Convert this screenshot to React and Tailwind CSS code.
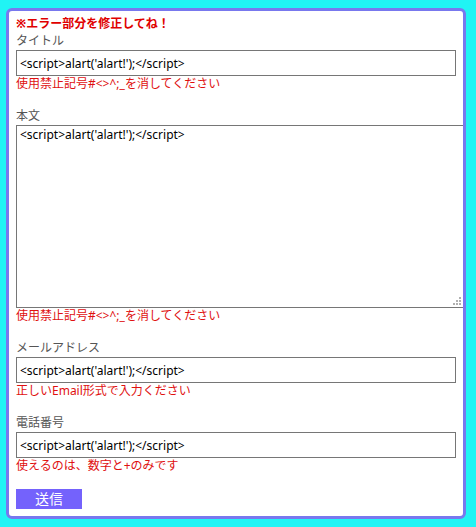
import React from 'react';

const fieldClass =
  'block w-[440px] h-[26px] border border-[#767676] bg-white px-[3px] text-[12px] text-black outline-none';

function ErrorText({ children }) {
  return <p className="text-[12px] leading-4 text-[#e01010]">{children}</p>;
}

function Label({ children }) {
  return <p className="text-[12px] leading-[18px] text-[#555]">{children}</p>;
}

function Grip() {
  // dotted resize grip in the textarea corner
  const dots = [
    [6, 0],
    [3, 3],
    [6, 3],
    [0, 6],
    [3, 6],
    [6, 6],
  ];
  return (
    <div className="pointer-events-none absolute right-[3px] bottom-[3px] w-[8px] h-[8px]">
      {dots.map(([x, y], i) => (
        <span
          key={i}
          className="absolute w-[2px] h-[2px] bg-[#b0b0b0]"
          style={{ left: x, top: y }}
        />
      ))}
    </div>
  );
}

export default function App() {
  const value = "<script>alart('alart!');</script>";
  return (
    <div
      className="min-h-screen w-[476px] bg-[#20f4f4] pt-[8px] pl-[6px]"
      style={{ fontFamily: '"Noto Sans", "Noto Sans CJK JP", sans-serif' }}
    >
      <form
        className="w-[460px] h-[511px] overflow-hidden rounded-[6px] border-[3px] border-[#7878ee] bg-white pl-[7px] pt-[5px]"
        onSubmit={(e) => e.preventDefault()}
      >
        <p className="text-[12px] leading-4 font-bold text-[#e00000]">※エラー部分を修正してね！</p>

        <Label>タイトル</Label>
        <input className={fieldClass} defaultValue={value} />
        <ErrorText>使用禁止記号#&lt;&gt;^;_を消してください</ErrorText>

        <div className="mt-[15px]">
          <Label>本文</Label>
          <div className="relative w-[448px]">
            <textarea
              className="block w-[448px] h-[183px] resize-none border border-[#767676] bg-white px-[3px] pt-[1px] text-[12px] leading-4 text-black outline-none"
              defaultValue={value}
            />
            <Grip />
          </div>
          <ErrorText>使用禁止記号#&lt;&gt;^;_を消してください</ErrorText>
        </div>

        <div className="mt-[15px]">
          <Label>メールアドレス</Label>
          <input className={fieldClass} defaultValue={value} />
          <ErrorText>正しいEmail形式で入力ください</ErrorText>
        </div>

        <div className="mt-[15px]">
          <Label>電話番号</Label>
          <input className={fieldClass} defaultValue={value} />
          <ErrorText>使えるのは、数字と+のみです</ErrorText>
        </div>

        <button
          type="submit"
          className="mt-[15px] block w-[66px] h-[20px] bg-[#7462fc] text-[14px] leading-5 text-white"
        >
          送信
        </button>
      </form>
    </div>
  );
}
